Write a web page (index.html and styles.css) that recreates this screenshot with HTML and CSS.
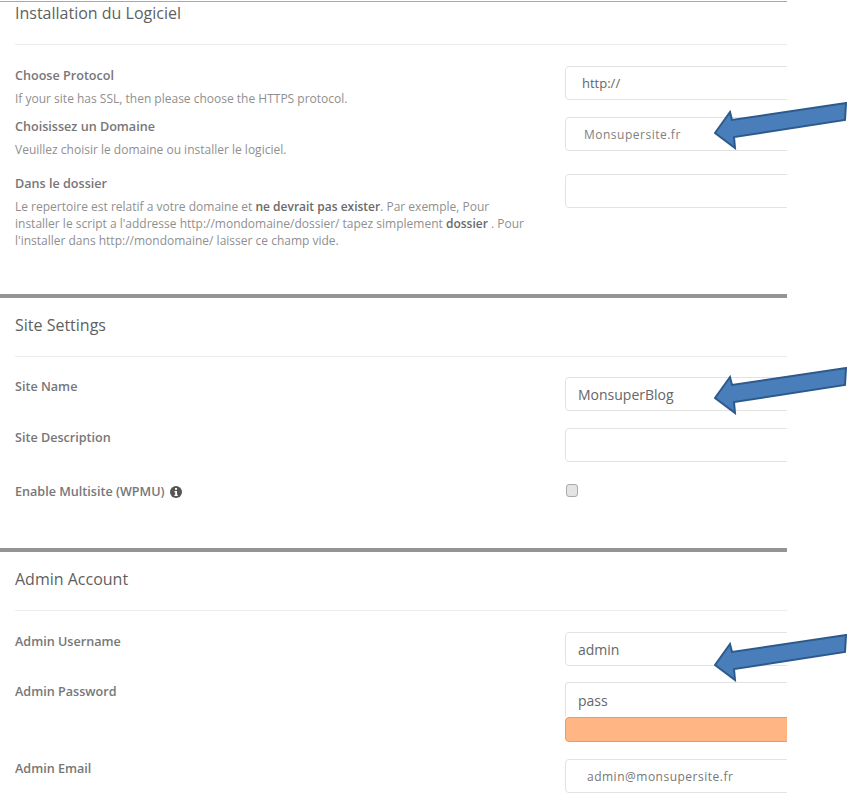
FILE: index.html
```html
<!DOCTYPE html>
<html lang="fr">
<head>
    <meta charset="UTF-8">
    <meta name="viewport" content="width=device-width, initial-scale=1.0">
    <title>Installation du Logiciel</title>
    <link rel="stylesheet" href="styles.css">
</head>
<body>
    <div class="page">
        <div class="form">
            <section class="section section-first">
                <h2>Installation du Logiciel</h2>
                <div class="row row-protocol">
                    <div class="label">
                        <label>Choose Protocol</label>
                        <p>If your site has SSL, then please choose the HTTPS protocol.</p>
                    </div>
                    <input class="field" type="text" value="http://">
                </div>
                <div class="row row-domain">
                    <div class="label">
                        <label>Choisissez un Domaine</label>
                        <p>Veuillez choisir le domaine ou installer le logiciel.</p>
                    </div>
                    <input class="field field-small" type="text" value="Monsupersite.fr">
                </div>
                <div class="row">
                    <div class="label">
                        <label>Dans le dossier</label>
                        <p>Le repertoire est relatif a votre domaine et <b>ne devrait pas exister</b>. Par exemple, Pour installer le script a l'addresse http://mondomaine/dossier/ tapez simplement <b>dossier</b> . Pour l'installer dans http://mondomaine/ laisser ce champ vide.</p>
                    </div>
                    <input class="field" type="text">
                </div>
            </section>

            <section class="section section-site">
                <h2>Site Settings</h2>
                <div class="row">
                    <div class="label"><label>Site Name</label></div>
                    <input class="field field-large" type="text" value="MonsuperBlog">
                </div>
                <div class="row">
                    <div class="label"><label>Site Description</label></div>
                    <input class="field" type="text">
                </div>
                <div class="row row-check">
                    <div class="label">
                        <label>Enable Multisite (WPMU)</label>
                        <svg class="info" viewBox="0 0 12 12" aria-hidden="true">
                            <circle cx="6" cy="6" r="6"/>
                            <rect x="5" y="2" width="2" height="1.8" fill="#fff"/>
                            <path d="M4.4 4.9H7V8.7H7.8V10H4.4V8.7H5.2V6.2H4.4Z" fill="#fff"/>
                        </svg>
                    </div>
                    <input class="check" type="checkbox">
                </div>
            </section>

            <section class="section section-admin">
                <h2>Admin Account</h2>
                <div class="row row-username">
                    <div class="label"><label>Admin Username</label></div>
                    <input class="field field-large" type="text" value="admin">
                </div>
                <div class="row">
                    <div class="label"><label>Admin Password</label></div>
                    <div class="password">
                        <input class="field field-large" type="text" value="pass">
                        <div class="strength"></div>
                    </div>
                </div>
                <div class="row">
                    <div class="label"><label>Admin Email</label></div>
                    <input class="field field-small field-email" type="text" value="admin@monsupersite.fr">
                </div>
            </section>
        </div>

        <svg class="arrow arrow-domain" viewBox="0 0 136 48" aria-hidden="true">
            <path d="M1 31L16 10L18 18L132 1L131 18L20 35L21 46Z"/>
        </svg>
        <svg class="arrow arrow-site" viewBox="0 0 136 48" aria-hidden="true">
            <path d="M1 31L16 10L18 18L132 1L131 18L20 35L21 46Z"/>
        </svg>
        <svg class="arrow arrow-admin" viewBox="0 0 136 48" aria-hidden="true">
            <path d="M1 31L16 10L18 18L132 1L131 18L20 35L21 46Z"/>
        </svg>
    </div>
</body>
</html>
```

FILE: styles.css
```css
body {
    margin: 0;
    background: #fff;
    font-family: "Open Sans", "Liberation Sans", sans-serif;
    color: #666;
}
.page {
    position: relative;
    width: 851px;
    height: 800px;
    overflow: hidden;
}
.form {
    width: 787px;
    overflow: hidden;
}
.section {
    border-top: 4px solid #949494;
    padding: 0 0 0 15px;
}
.section-first {
    height: 292px;
    margin-top: 1px;
    border-top: 1px solid #a8a8a8;
}
.section-site {
    height: 250px;
}
.section h2 {
    margin: 0 0 20px;
    padding: 16px 0 19px;
    border-bottom: 1px solid #ececec;
    font-size: 16px;
    font-weight: 400;
    line-height: 23px;
    color: #5f5f5f;
}
.section-first h2 {
    margin-bottom: 21px;
    padding: 0 0 19px;
}
.section-admin h2 {
    margin-bottom: 21px;
}
.row {
    display: grid;
    grid-template-columns: 550px 1fr;
    min-height: 34px;
    margin-bottom: 17px;
}
.row-protocol {
    height: 34px;
}
.row-domain {
    height: 40px;
}
.row-username {
    margin-bottom: 16px;
}
.label {
    margin-top: -1px;
    line-height: 18px;
}
.row-check .label {
    margin-top: 2px;
}
.label label {
    font-size: 12.6px;
    font-weight: 600;
    line-height: 18px;
    color: #777;
}
.label p {
    width: 516px;
    margin: 5px 0 0;
    font-size: 12px;
    line-height: 17px;
    color: #8f8f8f;
}
.label b {
    font-weight: 600;
    color: #6a6a6a;
}
.field {
    box-sizing: border-box;
    width: 300px;
    height: 34px;
    padding: 0 16px;
    border: 1px solid #e2e2e2;
    border-radius: 4px;
    background: #fff;
    font-family: inherit;
    font-size: 13px;
    color: #666;
}
.field-small {
    padding-left: 18px;
    font-size: 12px;
    font-weight: 500;
    letter-spacing: 0.5px;
    color: #808080;
}
.field-email {
    padding-left: 21px;
    font-weight: 400;
    color: #777;
}
.field-large {
    padding-left: 12px;
    font-size: 14px;
}
.password {
    display: flex;
    flex-direction: column;
}
.password .field {
    height: 35px;
    border-bottom: 0;
    border-radius: 4px 4px 0 0;
}
.strength {
    box-sizing: border-box;
    width: 300px;
    height: 25px;
    border: 1px solid #eb9a66;
    border-radius: 4px;
    background: #ffb584;
}
.check {
    appearance: none;
    box-sizing: border-box;
    width: 12px;
    height: 13px;
    margin: 5px 0 0 1px;
    border: 1px solid #aaa;
    border-radius: 3px;
    background: #e4e4e4;
}
.info {
    width: 12px;
    height: 12px;
    margin-left: 1px;
    vertical-align: -2px;
    fill: #555;
}
.arrow {
    position: absolute;
    left: 714px;
    width: 136px;
    height: 48px;
    fill: #4a7ebb;
    stroke: #2c5a8c;
    stroke-width: 2;
}
.arrow-domain {
    top: 102px;
}
.arrow-site {
    top: 367px;
}
.arrow-admin {
    top: 634px;
}
```
